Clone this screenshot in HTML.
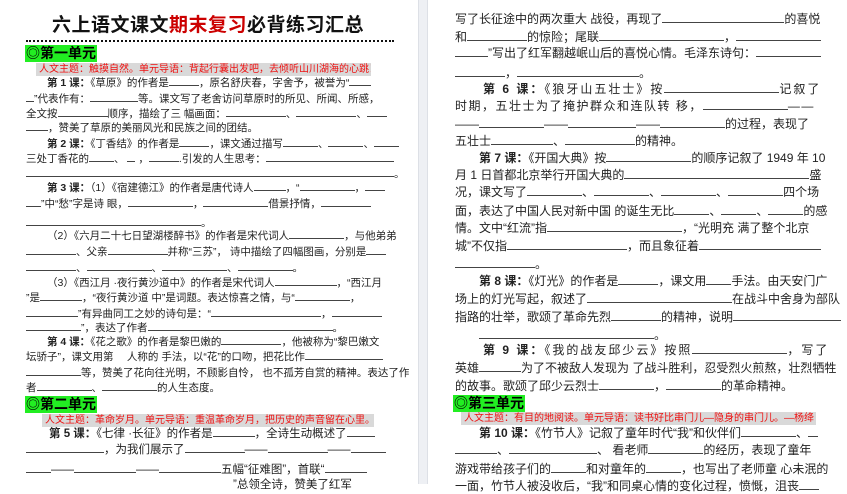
<!DOCTYPE html>
<html><head><meta charset="utf-8"><style>
*{margin:0;padding:0;box-sizing:border-box}
body{width:847px;height:484px;overflow:hidden;background:#fff;position:relative;font-family:"Liberation Sans","Noto Sans CJK SC",sans-serif;color:#222}
.gap{position:absolute;left:418px;top:0;width:10px;height:484px;background:#eef0f4;border-left:1px solid #dde0e6;border-right:1px solid #dde0e6}
.l{position:absolute;white-space:nowrap;font-size:10.5px;line-height:14px}
.L{left:26px}
.R{left:455px;font-size:12px;line-height:16px}
.u{display:inline-block;border-bottom:1px solid #444;height:11px;vertical-align:baseline}
.R .u{height:12px}
b{font-weight:bold}
.unit{position:absolute;background:#22ee22;font-weight:bold;font-size:14px;line-height:17px;padding:0 1px;color:#000}
.theme{position:absolute;background:#d9d9d9;color:#ee1111;font-size:10px;line-height:13px;padding:0 3px;white-space:nowrap;overflow:hidden}
</style></head><body>
<div class="gap"></div>
<div style="position:absolute;left:52px;top:14px;font-size:19px;font-weight:bold;letter-spacing:0.5px;color:#111;line-height:24px">六上语文课文<span style="color:#c00">期末复习</span>必背练习汇总</div>
<div style="position:absolute;left:26px;top:40px;width:368px;border-top:2px dotted #111"></div>
<div class="unit" style="left:25px;top:45px">◎第一单元</div>
<div class="theme" style="left:36px;top:63px;width:335px">人文主题：触摸自然。单元导语：背起行囊出发吧，去倾听山川湖海的心跳！</div>
<div class="l L" style="top:75px">&emsp;&emsp;<b>第 1 课：</b>《草原》的作者是<span class="u" style="width:30px"></span>，原名舒庆春，字舍予，被誉为“<span class="u" style="width:22px"></span></div>
<div class="l L" style="top:91px"><span class="u" style="width:8px"></span>”代表作有：<span class="u" style="width:48px"></span>等。课文写了老舍访问草原时的所见、所闻、所感，</div>
<div class="l L" style="top:106px">全文按<span class="u" style="width:50px"></span>顺序，描绘了三 幅画面：<span class="u" style="width:60px"></span>、<span class="u" style="width:60px"></span>、<span class="u" style="width:20px"></span></div>
<div class="l L" style="top:120px"><span class="u" style="width:22px"></span>，赞美了草原的美丽风光和民族之间的团结。</div>
<div class="l L" style="top:136px">&emsp;&emsp;<b>第 2 课：</b>《丁香结》的作者是<span class="u" style="width:30px"></span>，课文通过描写<span class="u" style="width:35px"></span>、<span class="u" style="width:35px"></span>、<span class="u" style="width:25px"></span></div>
<div class="l L" style="top:151px">三处丁香花的<span class="u" style="width:25px"></span>、 <span class="u" style="width:8px"></span> ，<span class="u" style="width:30px"></span>.引发的人生思考：<span class="u" style="width:128px"></span></div>
<div class="l L" style="top:166px"><span class="u" style="width:368px"></span>。</div>
<div class="l L" style="top:180px">&emsp;&emsp;<b>第 3 课：</b>（1）《宿建德江》的作者是唐代诗人<span class="u" style="width:32px"></span>，“<span class="u" style="width:55px"></span>，<span class="u" style="width:20px"></span></div>
<div class="l L" style="top:196px"><span class="u" style="width:15px"></span>”中“愁”字是诗 眼，<span class="u" style="width:65px"></span>，<span class="u" style="width:65px"></span>借景抒情，<span class="u" style="width:50px"></span></div>
<div class="l L" style="top:215px"><span class="u" style="width:175px"></span>。</div>
<div class="l L" style="top:228px">&emsp;&emsp;（2）《六月二十七日望湖楼醉书》的作者是宋代词人<span class="u" style="width:55px"></span>，与他弟弟</div>
<div class="l L" style="top:244px"><span class="u" style="width:50px"></span>、父亲<span class="u" style="width:60px"></span>并称“三苏”， 诗中描绘了四幅图画，分别是<span class="u" style="width:20px"></span></div>
<div class="l L" style="top:260px"><span class="u" style="width:50px"></span>、<span class="u" style="width:65px"></span>、<span class="u" style="width:65px"></span>、<span class="u" style="width:55px"></span>。</div>
<div class="l L" style="top:275px">&emsp;&emsp;（3）《西江月 ·夜行黄沙道中》的作者是宋代词人<span class="u" style="width:62px"></span>，“西江月</div>
<div class="l L" style="top:290px">”是<span class="u" style="width:42px"></span>，“夜行黄沙道 中”是词题。表达惊喜之情，与“<span class="u" style="width:55px"></span>，</div>
<div class="l L" style="top:306px"><span class="u" style="width:52px"></span>”有异曲同工之妙的诗句是：“<span class="u" style="width:110px"></span>，<span class="u" style="width:50px"></span></div>
<div class="l L" style="top:320px"><span class="u" style="width:55px"></span>”，表达了作者<span class="u" style="width:185px"></span>。</div>
<div class="l L" style="top:334px">&emsp;&emsp;<b>第 4 课：</b>《花之歌》的作者是黎巴嫩的<span class="u" style="width:60px"></span>，他被称为“黎巴嫩文</div>
<div class="l L" style="top:349px">坛骄子”，课文用第 &emsp;人称的 手法，以“花”的口吻，把花比作<span class="u" style="width:78px"></span></div>
<div class="l L" style="top:365px"><span class="u" style="width:55px"></span>等，赞美了花向往光明，不顾影自怜， 也不孤芳自赏的精神。表达了作</div>
<div class="l L" style="top:380px">者<span class="u" style="width:55px"></span>、<span class="u" style="width:55px"></span>的人生态度。</div>
<div class="unit" style="left:25px;top:396px">◎第二单元</div>
<div class="theme" style="left:42px;top:414px;width:332px">人文主题：革命岁月。单元导语：重温革命岁月，把历史的声音留在心里。</div>
<div class="l L" style="top:426px;font-size:11.5px">&emsp;&emsp;<b>第 5 课：</b>《七律 ·长征》的作者是<span class="u" style="width:42px"></span>，全诗生动概述了<span class="u" style="width:28px"></span></div>
<div class="l L" style="top:442px;font-size:11.5px"><span class="u" style="width:78px"></span>，为我们展示了<span class="u" style="width:60px"></span>——<span class="u" style="width:60px"></span>——<span class="u" style="width:35px"></span></div>
<div class="l L" style="top:462px;font-size:11.5px"><span class="u" style="width:25px"></span>——<span class="u" style="width:62px"></span>——<span class="u" style="width:62px"></span>五幅“征难图”，首联“<span class="u" style="width:42px"></span></div>
<div class="l L" style="top:478px;font-size:11.5px">&emsp;&emsp;&emsp;&emsp;&emsp;&emsp;&emsp;&emsp;&emsp;&emsp;&emsp;&emsp;&emsp;&emsp;&emsp;&emsp;&emsp;&emsp;”总领全诗，赞美了红军</div>

<div class="l R" style="top:11px">写了长征途中的两次重大 战役，再现了<span class="u" style="width:122px"></span>的喜悦</div>
<div class="l R" style="top:29px">和<span class="u" style="width:60px"></span>的惊险；尾联<span class="u" style="width:125px"></span>，<span class="u" style="width:85px"></span></div>
<div class="l R" style="top:45px"><span class="u" style="width:33px"></span>”写出了红军翻越岷山后的喜悦心情。毛泽东诗句：<span class="u" style="width:65px"></span></div>
<div class="l R" style="top:65px"><span class="u" style="width:50px"></span>，<span class="u" style="width:122px"></span>。</div>
<div class="l R" style="top:81px;letter-spacing:2px">&emsp;&emsp;<b>第 6 课：</b>《狼牙山五壮士》按<span class="u" style="width:115px"></span>记叙了</div>
<div class="l R" style="top:98px;letter-spacing:1.5px">时期，五壮士为了掩护群众和连队转 移，<span class="u" style="width:85px"></span>——</div>
<div class="l R" style="top:116px">——<span class="u" style="width:65px"></span>——<span class="u" style="width:68px"></span>——<span class="u" style="width:65px"></span>的过程，表现了</div>
<div class="l R" style="top:133px">五壮士<span class="u" style="width:62px"></span>、<span class="u" style="width:70px"></span>的精神。</div>
<div class="l R" style="top:150px">&emsp;&emsp;<b>第 7 课：</b>《开国大典》按<span class="u" style="width:85px"></span>的顺序记叙了 1949 年 10</div>
<div class="l R" style="top:167px">月 1 日首都北京举行开国大典的<span class="u" style="width:185px"></span>盛</div>
<div class="l R" style="top:184px">况，课文写了<span class="u" style="width:55px"></span>、<span class="u" style="width:55px"></span>、<span class="u" style="width:55px"></span>、<span class="u" style="width:55px"></span>四个场</div>
<div class="l R" style="top:203px">面，表达了中国人民对新中国 的诞生无比<span class="u" style="width:35px"></span>、<span class="u" style="width:35px"></span>、<span class="u" style="width:35px"></span>的感</div>
<div class="l R" style="top:220px">情。文中“红流”指<span class="u" style="width:135px"></span>，“光明充 满了整个北京</div>
<div class="l R" style="top:238px">城”不仅指<span class="u" style="width:120px"></span>，而且象征着<span class="u" style="width:122px"></span></div>
<div class="l R" style="top:256px"><span class="u" style="width:80px"></span>。</div>
<div class="l R" style="top:273px">&emsp;&emsp;<b>第 8 课：</b>《灯光》的作者是<span class="u" style="width:40px"></span>，课文用<span class="u" style="width:25px"></span>手法。由天安门广</div>
<div class="l R" style="top:291px">场上的灯光写起，叙述了<span class="u" style="width:145px"></span>在战斗中舍身为部队</div>
<div class="l R" style="top:309px">指路的壮举，歌颂了革命先烈<span class="u" style="width:50px"></span>的精神，说明<span class="u" style="width:108px"></span></div>
<div class="l R" style="top:327px">&emsp;&emsp;<span class="u" style="width:175px"></span>。</div>
<div class="l R" style="top:342px;letter-spacing:2px">&emsp;&emsp;<b>第 9 课：</b>《我的战友邱少云》按照<span class="u" style="width:95px"></span>，写了</div>
<div class="l R" style="top:360px">英雄<span class="u" style="width:42px"></span>为了不被敌人发现为 了战斗胜利，忍受烈火煎熬，壮烈牺牲</div>
<div class="l R" style="top:378px">的故事。歌颂了邱少云烈士<span class="u" style="width:55px"></span>，<span class="u" style="width:55px"></span>的革命精神。</div>
<div class="unit" style="left:453px;top:395px">◎第三单元</div>
<div class="theme" style="left:461px;top:412px;width:355px">人文主题：有目的地阅读。单元导语：读书好比串门儿—隐身的串门儿。—杨绛</div>
<div class="l R" style="top:425px">&emsp;&emsp;<b>第 10 课：</b>《竹节人》记叙了童年时代“我”和伙伴们<span class="u" style="width:55px"></span>、<span class="u" style="width:10px"></span></div>
<div class="l R" style="top:442px"><span class="u" style="width:42px"></span>、<span class="u" style="width:88px"></span>、 看老师<span class="u" style="width:55px"></span>的经历，表现了童年</div>
<div class="l R" style="top:461px">游戏带给孩子们的<span class="u" style="width:35px"></span>和对童年的<span class="u" style="width:35px"></span>，也写出了老师童 心未泯的</div>
<div class="l R" style="top:478px">一面，竹节人被没收后，“我”和同桌心情的变化过程，愤慨，沮丧<span class="u" style="width:20px"></span></div>
</body></html>
